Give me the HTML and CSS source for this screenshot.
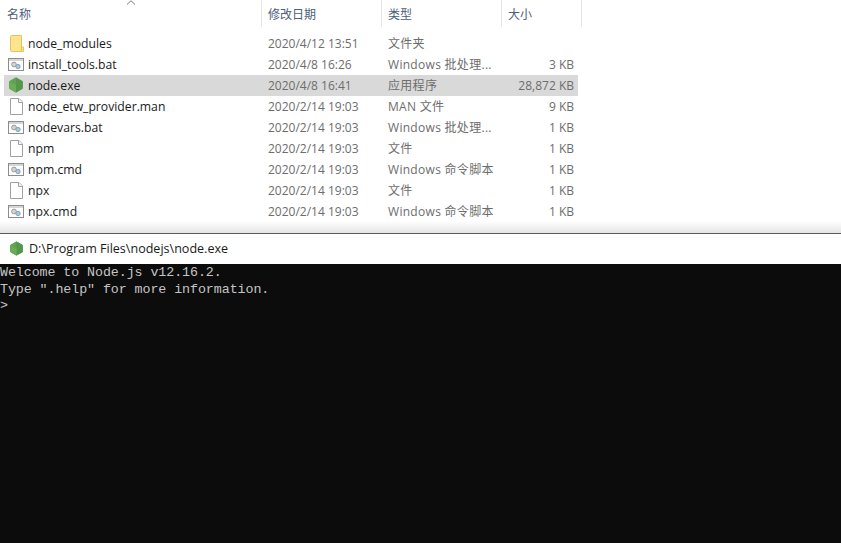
FILE: index.html
```html
<!DOCTYPE html>
<html lang="zh">
<head>
<meta charset="utf-8">
<title>node.exe</title>
<link rel="stylesheet" href="styles.css">
</head>
<body>
<svg class="defs" width="0" height="0" aria-hidden="true">
  <symbol id="bat" viewBox="0 0 16 13">
    <rect x=".5" y=".5" width="15" height="12" fill="#fff" stroke="#8c8c8c"/>
    <rect x="1" y="1" width="14" height="2" fill="#d6d6d6"/>
    <circle cx="6" cy="6.5" r="2.4" fill="#d4d4d4" stroke="#8a8a8a" stroke-width=".8"/>
    <circle cx="10" cy="8.5" r="2.2" fill="#a9c6de" stroke="#7d9ab2" stroke-width=".8"/>
  </symbol>
  <symbol id="file" viewBox="0 0 13 17">
    <path d="M.5.5H9L12.5 4V16.5H.5Z" fill="#fff" stroke="#a0a0a0"/>
    <path d="M8.5.5V4.5H12.5" fill="#f2f2f2" stroke="#a0a0a0"/>
  </symbol>
  <symbol id="folder" viewBox="0 0 14 17">
    <path d="M.5 1.5Q.5.5 1.5.5H11.5V12H13.5V16.5H1.5Q.5 16.5 .5 15.5Z" fill="#fde48f" stroke="#e8c25c"/>
    <path d="M11.5 12V16.5" stroke="#e8c25c" fill="none"/>
  </symbol>
  <symbol id="node" viewBox="0 0 16 16">
    <path d="M8 .8 14.4 4.4V11.6L8 15.2 1.6 11.6V4.4Z" fill="#5fa350" stroke="#5fa350" stroke-linejoin="round"/>
    <path d="M8 .8 14.4 4.4V11.6L8 15.2Z" fill="#54964a"/>
    <path d="M1.6 4.4 8 8V15.2L1.6 11.6Z" fill="#6cab58"/>
  </symbol>
</svg>

<section class="explorer">
  <div class="sort-arrow"><svg width="10" height="5" viewBox="0 0 10 5"><path d="M1 4.5 5 .8 9 4.5" fill="none" stroke="#7a7a7a"/></svg></div>
  <div class="head">
    <div class="hcell">名称</div>
    <div class="hcell">修改日期</div>
    <div class="hcell">类型</div>
    <div class="hcell">大小</div>
  </div>
  <div class="rows">
    <div class="row"><span class="name"><svg class="ico ico-f"><use href="#folder"/></svg>node_modules</span><span class="cell">2020/4/12 13:51</span><span class="cell type">文件夹</span><span class="size"></span></div>
    <div class="row"><span class="name"><svg class="ico ico-b"><use href="#bat"/></svg>install_tools.bat</span><span class="cell">2020/4/8 16:26</span><span class="cell type">Windows 批处理...</span><span class="size">3 KB</span></div>
    <div class="row selected"><span class="name"><svg class="ico ico-n"><use href="#node"/></svg>node.exe</span><span class="cell">2020/4/8 16:41</span><span class="cell type">应用程序</span><span class="size">28,872 KB</span></div>
    <div class="row"><span class="name"><svg class="ico ico-p"><use href="#file"/></svg>node_etw_provider.man</span><span class="cell">2020/2/14 19:03</span><span class="cell type">MAN 文件</span><span class="size">9 KB</span></div>
    <div class="row"><span class="name"><svg class="ico ico-b"><use href="#bat"/></svg>nodevars.bat</span><span class="cell">2020/2/14 19:03</span><span class="cell type">Windows 批处理...</span><span class="size">1 KB</span></div>
    <div class="row"><span class="name"><svg class="ico ico-p"><use href="#file"/></svg>npm</span><span class="cell">2020/2/14 19:03</span><span class="cell type">文件</span><span class="size">1 KB</span></div>
    <div class="row"><span class="name"><svg class="ico ico-b"><use href="#bat"/></svg>npm.cmd</span><span class="cell">2020/2/14 19:03</span><span class="cell type">Windows 命令脚本</span><span class="size">1 KB</span></div>
    <div class="row"><span class="name"><svg class="ico ico-p"><use href="#file"/></svg>npx</span><span class="cell">2020/2/14 19:03</span><span class="cell type">文件</span><span class="size">1 KB</span></div>
    <div class="row"><span class="name"><svg class="ico ico-b"><use href="#bat"/></svg>npx.cmd</span><span class="cell">2020/2/14 19:03</span><span class="cell type">Windows 命令脚本</span><span class="size">1 KB</span></div>
  </div>
  <div class="shadow"></div>
</section>

<section class="console">
  <div class="titlebar"><svg class="title-ico"><use href="#node"/></svg><span>D:\Program Files\nodejs\node.exe</span></div>
  <pre class="term">Welcome to Node.js v12.16.2.
Type ".help" for more information.
&gt;</pre>
</section>
</body>
</html>
```

FILE: styles.css
```css
* { box-sizing: border-box; }
html, body { margin: 0; height: 100%; overflow: hidden; background: #fff; }
body {
  display: flex;
  flex-direction: column;
  font-family: "Open Sans", "Noto Sans CJK SC", sans-serif;
  font-size: 12px;
}
.defs { position: absolute; }

.explorer { position: relative; height: 233px; flex: none; background: #fff; }
.sort-arrow { position: absolute; left: 126px; top: 0; line-height: 0; }

.head { display: grid; grid-template-columns: 262px 120px 120px 80px; width: 582px; height: 27px; }
.hcell {
  border-right: 1px solid #e5e5e5;
  padding: 7px 0 0 6px;
  line-height: 16px;
  font-size: 12px;
  color: #4c607a;
}
.hcell:first-child { padding-left: 7px; }

.rows { margin: 6px 0 0 4px; width: 574px; }
.row {
  display: grid;
  grid-template-columns: 258px 120px 114px 82px;
  height: 21px;
  align-items: center;
  line-height: 21px;
  white-space: nowrap;
  color: #6d6d6d;
}
.row.selected { background: #d9d9d9; }
.name { display: flex; align-items: center; color: #1a1a1a; padding-left: 24px; position: relative; font-size: 12.2px; }
.cell { padding-left: 6px; }
.type { letter-spacing: .3px; }
.size { text-align: right; padding-right: 4px; }

.ico { position: absolute; }
.ico-f { left: 6px; top: 2px; width: 14px; height: 17px; }
.ico-b { left: 4px; top: 4px; width: 16px; height: 13px; }
.ico-n { left: 4px; top: 2px; width: 16px; height: 16px; }
.ico-p { left: 6px; top: 2px; width: 13px; height: 17px; }

.shadow {
  position: absolute;
  left: 0;
  right: 0;
  bottom: 0;
  height: 12px;
  background: linear-gradient(to bottom, rgba(235,235,235,0), rgba(225,225,225,.85));
}

.console { flex: 1; display: flex; flex-direction: column; border-top: 1px solid #5a5a5a; min-height: 0; }
.titlebar {
  height: 30px;
  flex: none;
  display: flex;
  align-items: center;
  gap: 5px;
  padding: 0 0 1px 9px;
  background: #fff;
  color: #1a1a1a;
  font-size: 12.55px;
}
.title-ico { width: 15px; height: 15px; }
.term {
  flex: 1;
  margin: 0;
  background: #0c0c0c;
  color: #c4c4c4;
  font-family: "Liberation Mono", monospace;
  font-size: 13.33px;
  letter-spacing: -.08px;
  line-height: 16.5px;
  padding-top: 1px;
}
```
